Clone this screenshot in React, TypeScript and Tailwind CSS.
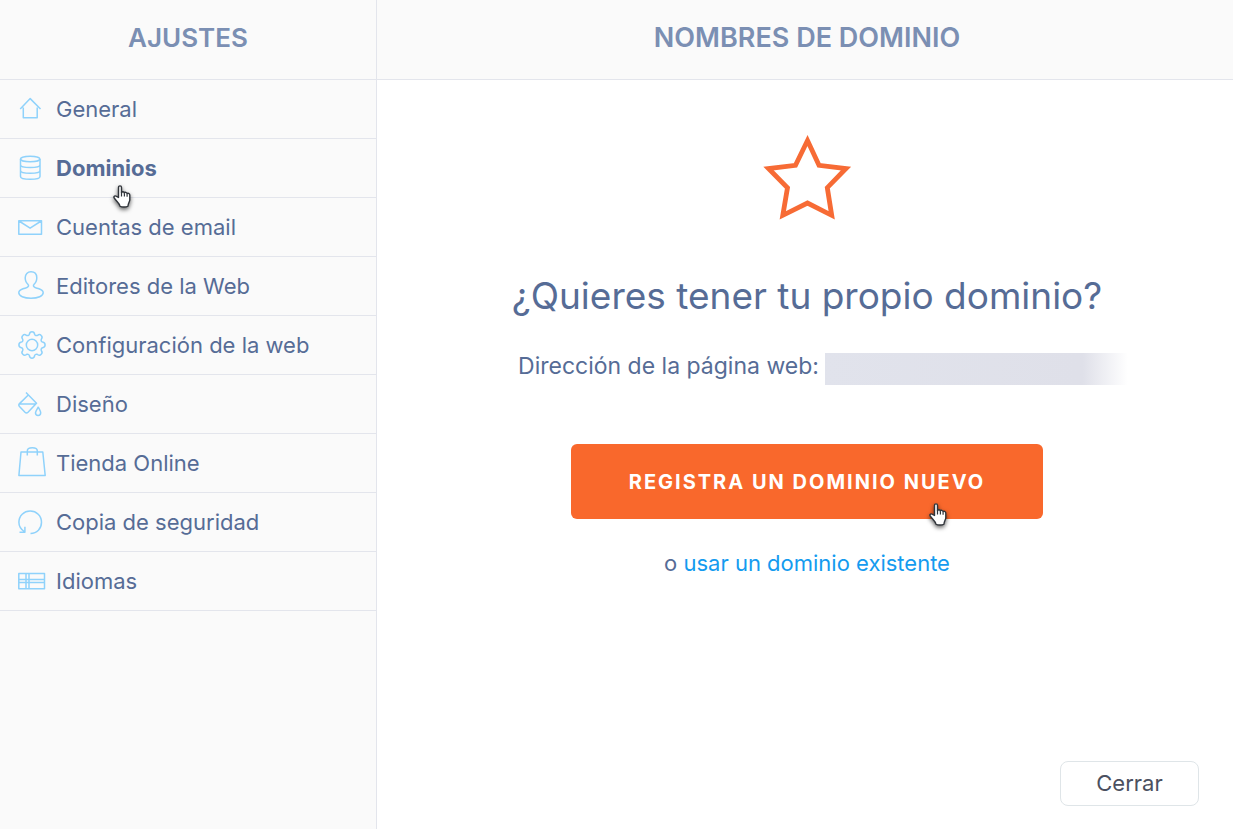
import type { ReactNode } from "react";
import clsx from "clsx";

const Icon = ({ children, className }: { children: ReactNode; className: string }) => (
  <svg
    className={clsx("block fill-none stroke-[#8fd2fb]", className)}
    strokeWidth="1.5"
    strokeLinejoin="round"
    aria-hidden="true"
  >
    {children}
  </svg>
);

const items = [
  {
    label: "General",
    icon: (
      <Icon className="w-7 h-8">
        <path d="M2.2 16 12.200 5.600 22.500 16M5.300 14.500v10.300h13.900V14.500" />
      </Icon>
    ),
  },
  {
    label: "Dominios",
    active: true,
    icon: (
      <Icon className="w-7 h-8">
        <ellipse cx="12.2" cy="7" rx="9.7" ry="2.8" />
        <path d="M2.5 7v17.500c0 3.8 19.5 3.8 19.5 0V7M2.5 12.700c0 3.8 19.5 3.8 19.5 0M2.5 18.500c0 3.8 19.5 3.8 19.5 0" />
      </Icon>
    ),
  },
  {
    label: "Cuentas de email",
    icon: (
      <Icon className="w-7 h-8">
        <path d="M.8 9.8h22.7v13.4H.8zM1 10l11.1 7.2L23.2 10" />
      </Icon>
    ),
  },
  {
    label: "Editores de la Web",
    icon: (
      <Icon className="w-7 h-8">
        <path d="M10.500 14.800C8.400 13.200 7.200 10.800 7.200 7.800 7.200 4.200 9.500 1.800 13 1.800s5.800 2.400 5.800 6c0 3-1.200 5.400-3.300 7M10.500 14.800c.6 3-2.500 2.900-5.500 4C2.300 19.800.8 21 .8 22.800.8 26 6 28.200 13 28.200s12.200-2.200 12.200-5.400c0-1.800-1.500-3-4.200-4-3-1.100-6.100-1-5.500-4" />
      </Icon>
    ),
  },
  {
    label: "Configuración de la web",
    icon: (
      <Icon className="w-7 h-8">
        <circle cx="14" cy="16" r="5.700" />
        <path d="M11.400 5.200C11.700 3 12.400 2.800 14 2.800s2.300.2 2.600 2.400c.3 1.200 1.900 1.800 3 1.100 1.800-1.400 2.500-1 3.600.2 1.200 1.100 1.500 1.800.2 3.600-.7 1.100-.1 2.700 1.200 3 2.200.3 2.500 1.100 2.500 2.900s-.3 2.400-2.500 2.700c-1.300.3-1.900 1.900-1.200 3 1.300 1.800 1 2.500-.2 3.600-1.100 1.200-1.800 1.500-3.600.2-1.100-.7-2.700-.1-3 1.200-.3 2.200-1 2.500-2.600 2.500s-2.300-.3-2.600-2.500c-.3-1.300-1.900-1.900-3-1.200-1.800 1.300-2.500 1-3.600-.2-1.200-1.100-1.500-1.800-.2-3.600.7-1.100.1-2.700-1.200-3C1.200 18.400.9 17.600.9 16s.3-2.600 2.500-2.900c1.300-.3 1.900-1.900 1.200-3-1.300-1.800-1-2.500.2-3.600 1.100-1.200 1.800-1.600 3.600-.2 1.100.7 2.700.1 3-1.100z" />
      </Icon>
    ),
  },
  {
    label: "Diseño",
    icon: (
      <Icon className="w-7 h-8">
        <path d="M8 4.500 18.500 15.200 10 24.300c-1 .9-2 .9-3 0L1.500 18.600c-.9-1-.9-2 0-3L10.300 7M1 16h17.300" />
        <path d="M20.200 19.200c-1.500 2.500-2.700 4.200-2.700 5.600 0 3.600 5.200 3.600 5.200 0 0-1.400-1-3.100-2.500-5.600z" />
      </Icon>
    ),
  },
  {
    label: "Tienda Online",
    icon: (
      <Icon className="w-7 h-8">
        <path d="M3 5h21.800l2.400 23.500H.9zM9.300 8.500V4c0-4.200 10-4.200 10 0v4.500" />
      </Icon>
    ),
  },
  {
    label: "Copia de seguridad",
    icon: (
      <Icon className="w-7 h-8">
        <path d="M12.500 27.500c6.500 0 11-4.900 11-11.200C23.500 9.800 18.500 5 12.200 5S.9 9.800.9 16.300c0 3.800 2 7 5.300 9.200M1.500 26.300h5.400v-5.600" />
      </Icon>
    ),
  },
  {
    label: "Idiomas",
    icon: (
      <Icon className="w-7 h-8">
        <path d="M.8 8.500h25.700v15.300H.8zM8 8.500v15.300M11 8.500v15.300M.8 14.500h25.700M.8 17.500h25.700" />
      </Icon>
    ),
  },
];

const HandCursor = ({ className }: { className: string }) => (
  <svg
    viewBox="0 0 18 23"
    className={clsx("absolute z-10 w-[18px] h-[23px] pointer-events-none drop-shadow-[0_2px_2px_rgba(0,0,0,0.6)]", className)}
    aria-hidden="true"
  >
    <path
      d="M5.500 12.500V2.500c0-2.200 3-2.200 3 0v5.300c.2-1.500 2.700-1.400 2.900.3.400-1.200 2.500-1 2.700.7.600-1 2.700-.6 2.700 1.300v4.600c0 2-1.600 3.200-1.900 6.500-1.500 1.100-6.400 1.100-7.900 0C6.700 18.300 3.500 16.500 1.200 13c-1-1.600 1-2.800 2.300-1.600z"
      fill="#fff"
      stroke="#30343a"
      strokeWidth="1.400"
      strokeLinejoin="round"
    />
    <path d="M8.500 7.500v4M11.400 8.300v3.200M14.100 9.200v2.500" fill="none" stroke="#30343a" strokeWidth="1.200" />
  </svg>
);

const Sidebar = () => (
  <aside className="w-[377px] shrink-0 border-r border-[#e3e5ec] bg-[#fafafa]">
    <header className="h-20 flex items-center justify-center border-b border-[#e3e5ec] pb-1">
      <h2 className="text-[26px] leading-8 font-semibold text-[#7b8fb3]">AJUSTES</h2>
    </header>
    <nav>
      <ul>
        {items.map((item) => (
          <li key={item.label} className="relative border-b border-[#e3e5ec]">
            <a
              href="#"
              aria-current={item.active ? "page" : undefined}
              className={clsx(
                "h-[58px] flex items-center gap-2.5 pl-[18px] text-[22px] text-[#566c96]",
                item.active && "font-bold"
              )}
            >
              {item.icon}
              {item.label}
            </a>
            {item.active && <HandCursor className="left-[113px] top-[46px]" />}
          </li>
        ))}
      </ul>
    </nav>
  </aside>
);

const DomainPanel = () => (
  <main className="flex-1 flex flex-col bg-white">
    <header className="h-20 flex items-center justify-center border-b border-[#e3e5ec] bg-[#fafafa] pb-1 pl-1">
      <h1 className="text-[27px] leading-8 font-semibold text-[#7b8fb3]">NOMBRES DE DOMINIO</h1>
    </header>

    <section className="flex-1 flex flex-col items-center pt-[54px] pl-1 text-[#566c96]">
      <svg viewBox="0 0 90 88" className="w-[90px] h-[88px]" aria-hidden="true">
        <path
          d="M45.500 6.500 57 31.300 84 34.500 65.300 53.700 69.700 81.300 45.500 69 20.800 81.300 25.500 53.700 6.500 34.500 33.500 31.300z"
          fill="none"
          stroke="#f76b35"
          strokeWidth="4.800"
        />
      </svg>
      <h2 className="mt-12 text-[37px] leading-[52px]">¿Quieres tener tu propio dominio?</h2>
      <p className="mt-7 flex items-start gap-1.5 pl-8 text-[23px] leading-8">
        Dirección de la página web:
        <span className="mt-[3px] w-[303px] h-8 bg-linear-to-r from-[#e1e3ec] via-[#dfe0e9] via-85% to-white" />
      </p>
      <div className="relative mt-[59px]">
        <button
          type="button"
          className="w-[472px] h-[75px] rounded-md bg-[#f9682c] text-xl font-bold tracking-widest text-white"
        >
          REGISTRA UN DOMINIO NUEVO
        </button>
        <HandCursor className="left-[358px] top-[59px]" />
      </div>
      <p className="mt-7 text-[22px] leading-8">
        o <a href="#" className="text-[#149bef]">usar un dominio existente</a>
      </p>
    </section>

    <footer className="flex justify-end pr-[34px] pb-[23px]">
      <button
        type="button"
        className="w-[139px] h-[45px] rounded-lg border border-[#dfe5e8] bg-white text-[22px] text-[#4b5060]"
      >
        Cerrar
      </button>
    </footer>
  </main>
);

export default function App() {
  return (
    <div className="min-h-screen flex font-['Inter','Liberation_Sans',sans-serif]">
      <Sidebar />
      <DomainPanel />
    </div>
  );
}
